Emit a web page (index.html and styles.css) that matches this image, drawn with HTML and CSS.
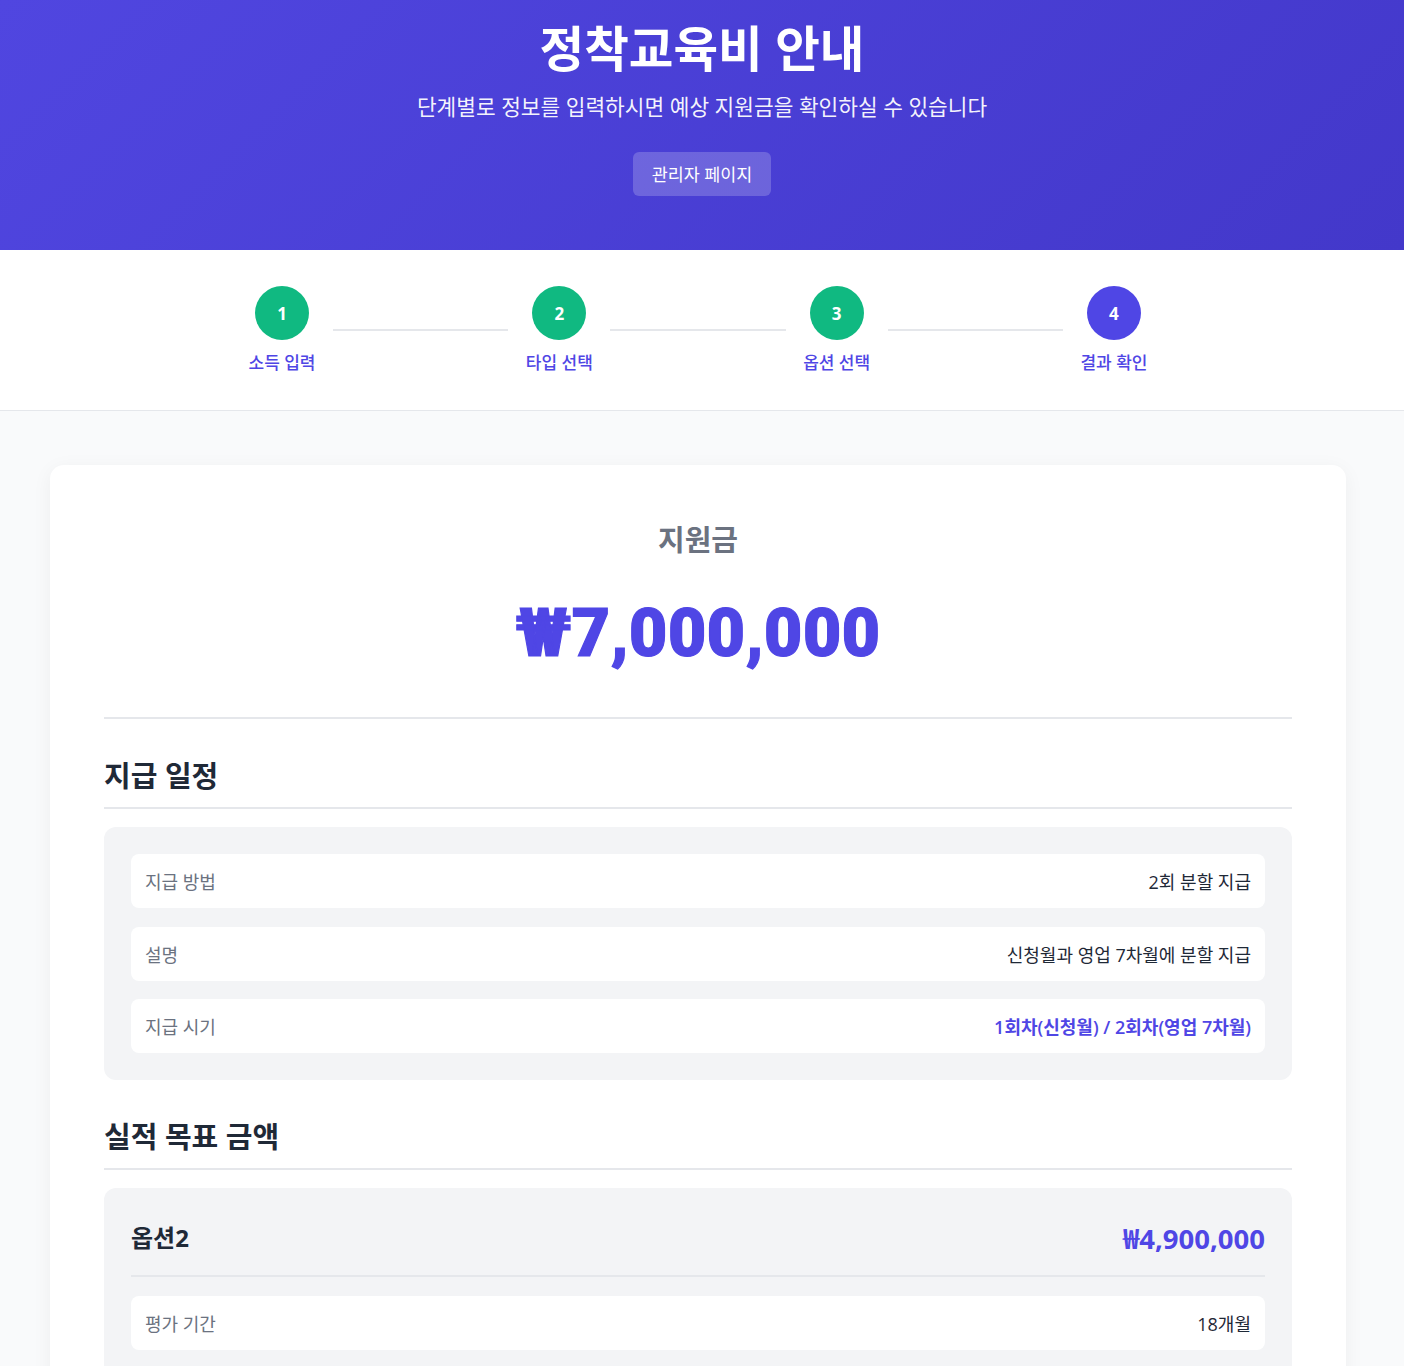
FILE: index.html
```html
<!DOCTYPE html>
<html lang="ko">
<head>
<meta charset="utf-8">
<title>정착교육비 안내</title>
<link rel="stylesheet" href="styles.css">
</head>
<body>
<header class="hero">
  <h1 class="hero-title">정착교육비 안내</h1>
  <p class="hero-sub">단계별로 정보를 입력하시면 예상 지원금을 확인하실 수 있습니다</p>
  <a class="hero-btn" href="#">관리자 페이지</a>
</header>

<nav class="steps">
  <div class="steps-inner">
    <div class="step done"><div class="step-circle">1</div><div class="step-label">소득 입력</div></div>
    <div class="step-line"></div>
    <div class="step done"><div class="step-circle">2</div><div class="step-label">타입 선택</div></div>
    <div class="step-line"></div>
    <div class="step done"><div class="step-circle">3</div><div class="step-label">옵션 선택</div></div>
    <div class="step-line"></div>
    <div class="step active"><div class="step-circle">4</div><div class="step-label">결과 확인</div></div>
  </div>
</nav>

<main class="main">
  <section class="card">
    <div class="result-head">
      <h2 class="result-title">지원금</h2>
      <div class="result-amount">₩7,000,000</div>
    </div>

    <h3 class="section-title">지급 일정</h3>
    <div class="box">
      <div class="row"><span class="row-label">지급 방법</span><span class="row-value">2회 분할 지급</span></div>
      <div class="row"><span class="row-label">설명</span><span class="row-value">신청월과 영업 7차월에 분할 지급</span></div>
      <div class="row"><span class="row-label">지급 시기</span><span class="row-value accent">1회차(신청월) / 2회차(영업 7차월)</span></div>
    </div>

    <h3 class="section-title">실적 목표 금액</h3>
    <div class="box">
      <div class="option-head">
        <span class="option-name">옵션2</span>
        <span class="option-amount">₩4,900,000</span>
      </div>
      <div class="row"><span class="row-label">평가 기간</span><span class="row-value">18개월</span></div>
      <div class="row"><span class="row-label">월 평균 목표</span><span class="row-value">₩272,222</span></div>
    </div>
  </section>
</main>
</body>
</html>
```

FILE: styles.css
```css
* { box-sizing: border-box; }

body {
  margin: 0;
  font-family: "Open Sans", "Noto Sans CJK KR", sans-serif;
  background: #f9fafb;
  color: #1f2937;
}

.hero {
  background: linear-gradient(135deg, #5046e0 0%, #4338ca 100%);
  color: #fff;
  text-align: center;
  padding: 20px 20px 54px;
}

.hero-title {
  margin: 0;
  font-size: 48.5px;
  line-height: 56px;
  font-weight: 700;
}

.hero-sub {
  margin: 15px 0 0;
  font-size: 21.4px;
  line-height: 32px;
  color: rgba(255, 255, 255, 0.95);
}

.hero-btn {
  display: inline-block;
  margin-top: 29px;
  width: 138px;
  height: 44px;
  line-height: 44px;
  border-radius: 6px;
  background: rgba(255, 255, 255, 0.2);
  color: #fff;
  font-size: 17.4px;
  text-decoration: none;
}

.steps {
  background: #fff;
  border-bottom: 1px solid #e5e7eb;
  padding: 36px 0 36px;
}

.steps-inner {
  width: 932px;
  margin: 0 auto;
  position: relative;
  left: -4px;
  display: flex;
  align-items: center;
}

.step {
  width: 100px;
  display: flex;
  flex-direction: column;
  align-items: center;
}

.step-circle {
  width: 54px;
  height: 54px;
  border-radius: 50%;
  display: flex;
  align-items: center;
  justify-content: center;
  color: #fff;
  font-weight: 700;
  font-size: 17px;
  background: #10b981;
}

.step.active .step-circle { background: #4f46e5; }

.step-label {
  margin-top: 12px;
  font-size: 17px;
  line-height: 22px;
  font-weight: 500;
  color: #4f46e5;
}

.step-line {
  flex: 1;
  height: 2px;
  background: #e5e7eb;
  margin: 0 1px;
}

.main {
  padding: 54px 58px 60px 50px;
}

.card {
  background: #fff;
  border-radius: 14px;
  box-shadow: 0 4px 20px rgba(0, 0, 0, 0.05);
  padding: 54px;
}

.result-head {
  text-align: center;
  border-bottom: 2px solid #e5e7eb;
  padding-bottom: 43px;
}

.result-title {
  margin: 0;
  font-size: 29px;
  line-height: 42px;
  font-weight: 700;
  color: #6b7280;
}

.result-amount {
  margin-top: 33px;
  font-family: "Roboto", "Noto Sans CJK KR", sans-serif;
  font-size: 66px;
  line-height: 80px;
  font-weight: 900;
  letter-spacing: 0.6px;
  -webkit-text-stroke: 1.2px #4f46e5;
  color: #4f46e5;
}

.section-title {
  margin: 36px 0 0;
  padding-bottom: 10px;
  border-bottom: 2px solid #e5e7eb;
  font-size: 29px;
  line-height: 42px;
  font-weight: 700;
  color: #1f2937;
}

.box {
  margin-top: 18px;
  background: #f3f4f6;
  border-radius: 12px;
  padding: 27px;
  display: flex;
  flex-direction: column;
  gap: 18.5px;
}

.row {
  background: #fff;
  border-radius: 8px;
  height: 54px;
  padding: 0 14px;
  display: flex;
  align-items: center;
  justify-content: space-between;
  font-size: 18px;
}

.row-label { color: #6b7280; }
.row-value { color: #1f2937; font-weight: 400; }
.row-value.accent { color: #4f46e5; font-weight: 600; }

.option-head {
  display: flex;
  align-items: center;
  justify-content: space-between;
  height: 62px;
  padding-bottom: 17px;
  border-bottom: 2px solid #e5e7eb;
}

.option-name {
  font-size: 24px;
  font-weight: 700;
  color: #1f2937;
}

.option-amount {
  font-size: 27.5px;
  font-weight: 700;
  color: #4f46e5;
}
```
